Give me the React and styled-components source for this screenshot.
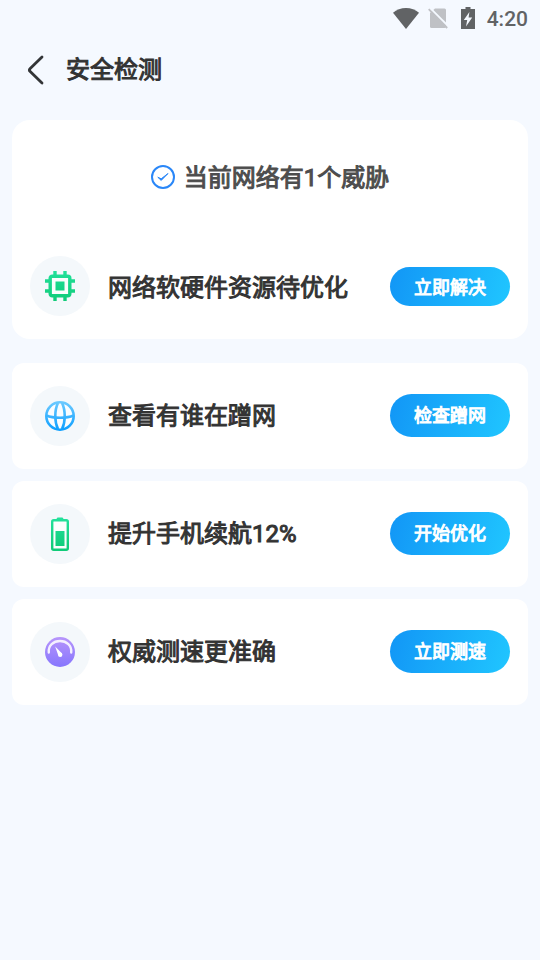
import React from "react";
import styled, { createGlobalStyle, css } from "styled-components";

const GlobalStyle = createGlobalStyle`
  * {
    box-sizing: border-box;
  }
  body {
    margin: 0;
    min-height: 100vh;
    background: #f5f9ff;
    color: #333333;
    font-family: Roboto, "Noto Sans CJK SC", sans-serif;
  }
`;

// regular weight thickened by an outline, like Android's fake bold
const heading = css`
  margin: 0;
  font-size: 24px;
  line-height: 36px;
  font-weight: 400;
  -webkit-text-stroke: 1px currentColor;
`;

const StatusBar = styled.div`
  display: flex;
  align-items: center;
  justify-content: flex-end;
  height: 36px;
  padding: 0 12px;
  color: #616365;
`;
const StatusIcon = styled.svg`
  display: block;
  margin-right: ${(props) => props.$gap}px;
`;
const Clock = styled.span`
  padding-top: 2px;
  font-size: 21px;
  line-height: 36px;
  font-weight: 500;
`;

const Header = styled.header`
  display: flex;
  align-items: center;
  height: 68px;
  padding: 0 24px;
`;
const BackButton = styled.button`
  display: flex;
  width: 42px;
  padding: 0;
  border: none;
  background: none;
  color: #333537;
  cursor: pointer;
`;
const Title = styled.h1`
  ${heading}
`;

const Main = styled.main`
  display: flex;
  flex-direction: column;
  gap: 24px;
  padding: 16px 12px;
`;
const Card = styled.section`
  padding: ${(props) => (props.$large ? "0 0 23px" : "23px 0")};
  border-radius: ${(props) => (props.$large ? 18 : 12)}px;
  background: #ffffff;
`;
const CardList = styled.div`
  display: flex;
  flex-direction: column;
  gap: 12px;
`;

const Alert = styled.div`
  display: flex;
  align-items: center;
  justify-content: center;
  gap: 9px;
  padding: 38px 18px 60px;
`;
const AlertText = styled.h2`
  ${heading}
  padding-top: 2px;
  color: #4d4d4d;
`;

const Row = styled.div`
  display: flex;
  align-items: center;
  padding: 0 18px;
`;
const IconCircle = styled.div`
  display: flex;
  align-items: center;
  justify-content: center;
  flex: none;
  width: 60px;
  height: 60px;
  margin-right: 18px;
  border-radius: 50%;
  background: #f4f8fb;
`;
const RowTitle = styled.h3`
  ${heading}
  flex: 1;
  padding-top: ${(props) => (props.$compact ? 4 : 0)}px;
`;
const ActionButton = styled.button`
  flex: none;
  width: 120px;
  height: ${(props) => (props.$compact ? 39 : 43)}px;
  margin-bottom: ${(props) => (props.$compact ? 0 : 1)}px;
  padding: ${(props) => (props.$compact ? "3px 0 0" : "1px 0 0")};
  border: none;
  border-radius: 22px;
  background: linear-gradient(105deg, #1296f6, #20c6ff);
  color: #ffffff;
  font-family: inherit;
  font-size: 18px;
  line-height: 28px;
  font-weight: 400;
  -webkit-text-stroke: 1px currentColor;
  cursor: pointer;
`;

function Gradient({ id, from, to }) {
  return (
    <defs>
      <linearGradient id={id} x1="0" y1="0" x2="0" y2="30" gradientUnits="userSpaceOnUse">
        <stop stopColor={from} />
        <stop offset="1" stopColor={to} />
      </linearGradient>
    </defs>
  );
}

function ChipIcon() {
  return (
    <svg width="30" height="30" viewBox="0 0 30 30" fill="none">
      <Gradient id="chip" from="#22e09a" to="#10cb78" />
      <path
        d="M10 0v5M20 0v5M10 25v5M20 25v5M0 10h5M0 20h5M25 10h5M25 20h5"
        stroke="url(#chip)"
        strokeWidth="3.4"
      />
      <rect x="5.2" y="5.2" width="19.6" height="19.6" rx="2" fill="#fbfefd" stroke="url(#chip)" strokeWidth="3.4" />
      <rect x="10.5" y="10.5" width="9" height="9" fill="url(#chip)" />
    </svg>
  );
}

function GlobeIcon() {
  return (
    <svg width="30" height="30" viewBox="0 0 30 30" fill="none">
      <Gradient id="globe" from="#6fcbff" to="#0a9eff" />
      <g stroke="url(#globe)" strokeWidth="2.6">
        <circle cx="15" cy="15" r="13.7" fill="#fbfdff" />
        <path d="M13 1.800C9.400 9 9.400 21 13 28.200M17 1.800C20.600 9 20.600 21 17 28.200" />
        <path d="M1.500 14.500C8 17.500 22 17.500 28.500 14.500" />
      </g>
    </svg>
  );
}

function BatteryIcon() {
  return (
    <svg width="30" height="34" viewBox="0 -2 30 34" fill="none">
      <Gradient id="battery" from="#22e09a" to="#10cb78" />
      <path d="M12.500 -1.500h5l1.500 2h-8z" fill="url(#battery)" />
      <rect x="7.200" y="1.200" width="15.600" height="29.500" rx="1.500" fill="#fbfefd" stroke="url(#battery)" strokeWidth="2.400" />
      <rect x="10.500" y="12" width="9" height="15" fill="url(#battery)" />
    </svg>
  );
}

function GaugeIcon() {
  return (
    <svg width="30" height="30" viewBox="0 0 30 30" fill="none">
      <Gradient id="gauge" from="#b795fb" to="#8676fd" />
      <circle cx="15" cy="15" r="15" fill="url(#gauge)" />
      <path
        d="M3.800 15.500C3 8.500 8.500 4 15 4s12 4.500 11.200 11.500"
        stroke="#f4f0ff"
        strokeWidth="2.400"
        strokeLinecap="round"
      />
      <path d="M10.200 9.400L17 16.600L13.300 18.500z" fill="#ffffff" />
      <circle cx="15.200" cy="17.700" r="2.200" fill="#ffffff" />
    </svg>
  );
}

const services = [
  { title: "查看有谁在蹭网", action: "检查蹭网", Icon: GlobeIcon },
  { title: "提升手机续航12%", action: "开始优化", Icon: BatteryIcon },
  { title: "权威测速更准确", action: "立即测速", Icon: GaugeIcon },
];

function ServiceRow({ title, action, Icon, compact }) {
  return (
    <Row>
      <IconCircle>
        <Icon />
      </IconCircle>
      <RowTitle $compact={compact}>{title}</RowTitle>
      <ActionButton type="button" $compact={compact}>
        {action}
      </ActionButton>
    </Row>
  );
}

function App() {
  return (
    <>
      <GlobalStyle />
      <StatusBar>
        {/* wifi */}
        <StatusIcon $gap={9} width="26" height="21" viewBox="0 0 26 21" fill="currentColor">
          <path d="M13 21L0 4.800C3.500 1.800 8 0 13 0s9.500 1.800 13 4.800z" />
        </StatusIcon>
        {/* no sim */}
        <StatusIcon $gap={13} width="20" height="21" viewBox="0 0 20 21" fill="#bfc1c5">
          <path d="M2 5L7 .5h9.500q1.500 0 1.500 1.500v16.500q0 1.500-1.500 1.500h-13q-1.500 0-1.500-1.500z" />
          <path d="M1.500 -.5L20.500 18.500" stroke="#f5f9ff" strokeWidth="2" />
          <path d="M.7 1.200L19.200 20" stroke="#bfc1c5" strokeWidth="1.800" />
        </StatusIcon>
        {/* charging */}
        <StatusIcon $gap={12} width="14" height="22" viewBox="0 0 14 22" fill="currentColor">
          <path d="M4.500 0h5v2H14v20H0V2h4.500z" />
          <path d="M8.400 5L2.800 13h3.400l-1.200 6.400l6.200-8.800H7.600z" fill="#f5f9ff" />
        </StatusIcon>
        <Clock>4:20</Clock>
      </StatusBar>
      <Header>
        <BackButton type="button" aria-label="返回">
          <svg width="24" height="30" viewBox="0 0 24 30" fill="none">
            <path
              d="M18 2L6.200 13.400q-1.600 1.600 0 3.200L18 28"
              stroke="currentColor"
              strokeWidth="2.800"
              strokeLinecap="round"
            />
          </svg>
        </BackButton>
        <Title>安全检测</Title>
      </Header>
      <Main>
        <Card $large>
          <Alert>
            <svg width="24" height="24" viewBox="0 0 24 24" fill="none" stroke="#2a87f8">
              <circle cx="12" cy="12" r="11" strokeWidth="2" />
              <path d="M6.800 12.200l3.400 3.200L17 8.500l-6.800 5.300z" fill="#2a87f8" strokeWidth="1" strokeLinejoin="round" />
            </svg>
            <AlertText>当前网络有1个威胁</AlertText>
          </Alert>
          <ServiceRow title="网络软硬件资源待优化" action="立即解决" Icon={ChipIcon} compact />
        </Card>
        <CardList>
          {services.map((service) => (
            <Card key={service.title}>
              <ServiceRow {...service} />
            </Card>
          ))}
        </CardList>
      </Main>
    </>
  );
}

export default App;
